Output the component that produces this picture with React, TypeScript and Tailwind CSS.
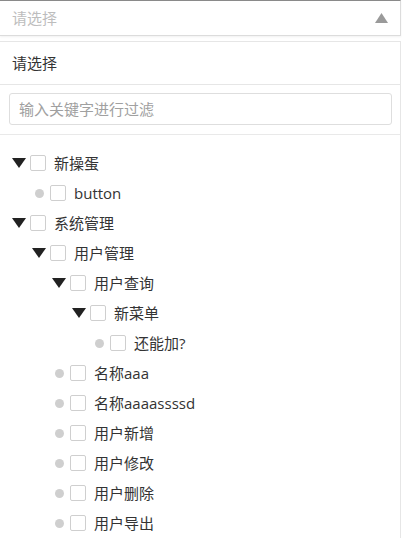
import type { ReactNode } from 'react'

type Node = {
  label: string
  level: number
  expanded?: boolean
}

const ROWS: Node[] = [
  { label: '新操蛋', level: 0, expanded: true },
  { label: 'button', level: 1 },
  { label: '系统管理', level: 0, expanded: true },
  { label: '用户管理', level: 1, expanded: true },
  { label: '用户查询', level: 2, expanded: true },
  { label: '新菜单', level: 3, expanded: true },
  { label: '还能加?', level: 4 },
  { label: '名称aaa', level: 2 },
  { label: '名称aaaassssd', level: 2 },
  { label: '用户新增', level: 2 },
  { label: '用户修改', level: 2 },
  { label: '用户删除', level: 2 },
  { label: '用户导出', level: 2 },
]

const PAD: Record<number, string> = {
  0: 'pl-[10px]',
  1: 'pl-[30px]',
  2: 'pl-[50px]',
  3: 'pl-[70px]',
  4: 'pl-[90px]',
}

const Caret = ({ className }: { className: string }) => (
  <svg viewBox="0 0 14 10" className={className}>
    <path d="M0 0 L14 0 L7 10 Z" fill="currentColor" />
  </svg>
)

const TreeRow = ({ node }: { node: Node }) => {
  let toggle: ReactNode
  if (node.expanded) {
    toggle = <Caret className="w-[14px] h-[10px] text-[#222]" />
  } else {
    toggle = <span className="w-[9px] h-[9px] rounded-full bg-[#cfcfcf]" />
  }
  return (
    <div className={`flex items-center h-[30px] ${PAD[node.level]}`}>
      <span className="w-[18px] flex items-center justify-center">{toggle}</span>
      <span className="ml-[2px] w-4 h-4 border border-[#cfcfcf] rounded-[2px] bg-white" />
      <span className="ml-2 text-[15px] text-[#333] leading-none">{node.label}</span>
    </div>
  )
}

const App = () => {
  return (
    <div
      className="w-[402px] h-[538px] overflow-hidden bg-white"
      style={{ fontFamily: '"Open Sans", "Noto Sans CJK SC", sans-serif' }}
    >
      {/* Select */}
      <div className="w-[401px] h-[36px] border-t border-t-[#8a8a8a] border-b border-r border-[#dcdcdc] flex items-center justify-between pl-3 pr-[12px] shadow-[0_1px_2px_rgba(0,0,0,0.06)]">
        <span className="text-[15px] text-[#bdbdbd]">请选择</span>
        <svg viewBox="0 0 13 10" className="w-[13px] h-[10px] text-[#9a9a9a]">
          <path d="M6.5 0 L13 10 L0 10 Z" fill="currentColor" />
        </svg>
      </div>

      {/* Dropdown panel */}
      <div className="mt-[5px] w-[401px] border-t border-r border-[#e6e6e6] h-[600px]">
        <div className="h-[43px] flex items-center pl-3 border-b border-[#e6e6e6]">
          <span className="text-[15px] text-[#333]">请选择</span>
        </div>
        <div className="pt-2 pb-[9px] px-[9px] border-b border-[#e9e9e9]">
          <input
            placeholder="输入关键字进行过滤"
            className="w-[383px] h-8 px-[9px] rounded-[3px] border border-[#dedede] text-[15px] placeholder:text-[#a0a0a0] focus:outline-none"
          />
        </div>
        <div className="pt-[13px]">
          {ROWS.map((n, i) => (
            <TreeRow key={i} node={n} />
          ))}
        </div>
      </div>
    </div>
  )
}

export default App
